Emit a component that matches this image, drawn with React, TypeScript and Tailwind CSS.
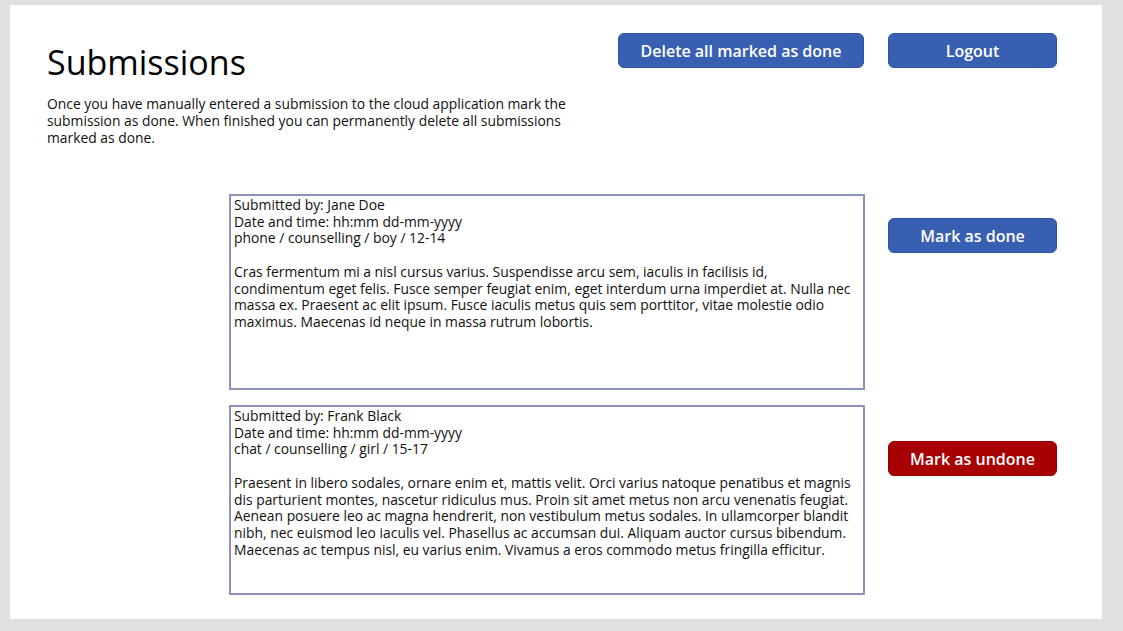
import React from "react";

const font = { fontFamily: '"Open Sans", "Noto Sans", sans-serif' };

function Btn({ children, red, className = "" }: { children: React.ReactNode; red?: boolean; className?: string }) {
  return (
    <button
      className={
        "h-[35px] rounded-[6px] border text-white text-[16px] font-semibold leading-none flex items-center justify-center " +
        (red ? "bg-[#a80000] border-[#960000] " : "bg-[#3860b2] border-[#2f53a3] ") +
        className
      }
    >
      {children}
    </button>
  );
}

function Submission({ lines, body, h }: { lines: string[]; body: string; h: string }) {
  return (
    <div className={"ml-[219px] w-[636px] border-2 border-[#8b90bd] px-[3px] pt-[1px] text-[13.86px] leading-[16.7px] text-[#111] " + h}>
      {lines.map((l) => (
        <div key={l}>{l}</div>
      ))}
      <div className="h-[16.7px]" />
      <p>{body}</p>
    </div>
  );
}

export default function App() {
  return (
    <div className="w-full h-[631px] bg-[#e1e1e1] overflow-hidden" style={font}>
      <div className="ml-[10px] mt-[5px] w-[1092px] h-[614px] bg-white flex flex-col">
        <div className="flex items-start pt-[28px]">
          <div className="pl-[37px] pt-[9px] w-[580px]">
            <h1 className="text-[34px] leading-[41px] text-black font-normal">Submissions</h1>
            <p className="mt-[12px] text-[13.86px] leading-[17px] text-[#111] w-[540px]">
              Once you have manually entered a submission to the cloud application mark the submission as done. When finished you can permanently delete all submissions marked as done.
            </p>
          </div>
          <div className="ml-auto mr-[45px] flex gap-[24px]">
            <Btn className="w-[246px]">Delete all marked as done</Btn>
            <Btn className="w-[169px]">Logout</Btn>
          </div>
        </div>

        <div className="mt-[48px] flex items-start">
          <Submission
            h="h-[196px]"
            lines={["Submitted by: Jane Doe", "Date and time: hh:mm dd-mm-yyyy", "phone / counselling / boy / 12-14"]}
            body="Cras fermentum mi a nisl cursus varius. Suspendisse arcu sem, iaculis in facilisis id, condimentum eget felis. Fusce semper feugiat enim, eget interdum urna imperdiet at. Nulla nec massa ex. Praesent ac elit ipsum. Fusce iaculis metus quis sem porttitor, vitae molestie odio maximus. Maecenas id neque in massa rutrum lobortis."
          />
          <Btn className="ml-[23px] mt-[24px] w-[169px]">Mark as done</Btn>
        </div>

        <div className="mt-[15px] flex items-start">
          <Submission
            h="h-[190px]"
            lines={["Submitted by: Frank Black", "Date and time: hh:mm dd-mm-yyyy", "chat / counselling / girl / 15-17"]}
            body="Praesent in libero sodales, ornare enim et, mattis velit. Orci varius natoque penatibus et magnis dis parturient montes, nascetur ridiculus mus. Proin sit amet metus non arcu venenatis feugiat. Aenean posuere leo ac magna hendrerit, non vestibulum metus sodales. In ullamcorper blandit nibh, nec euismod leo iaculis vel. Phasellus ac accumsan dui. Aliquam auctor cursus bibendum. Maecenas ac tempus nisl, eu varius enim. Vivamus a eros commodo metus fringilla efficitur."
          />
          <Btn red className="ml-[23px] mt-[36px] w-[169px]">Mark as undone</Btn>
        </div>
      </div>
    </div>
  );
}
